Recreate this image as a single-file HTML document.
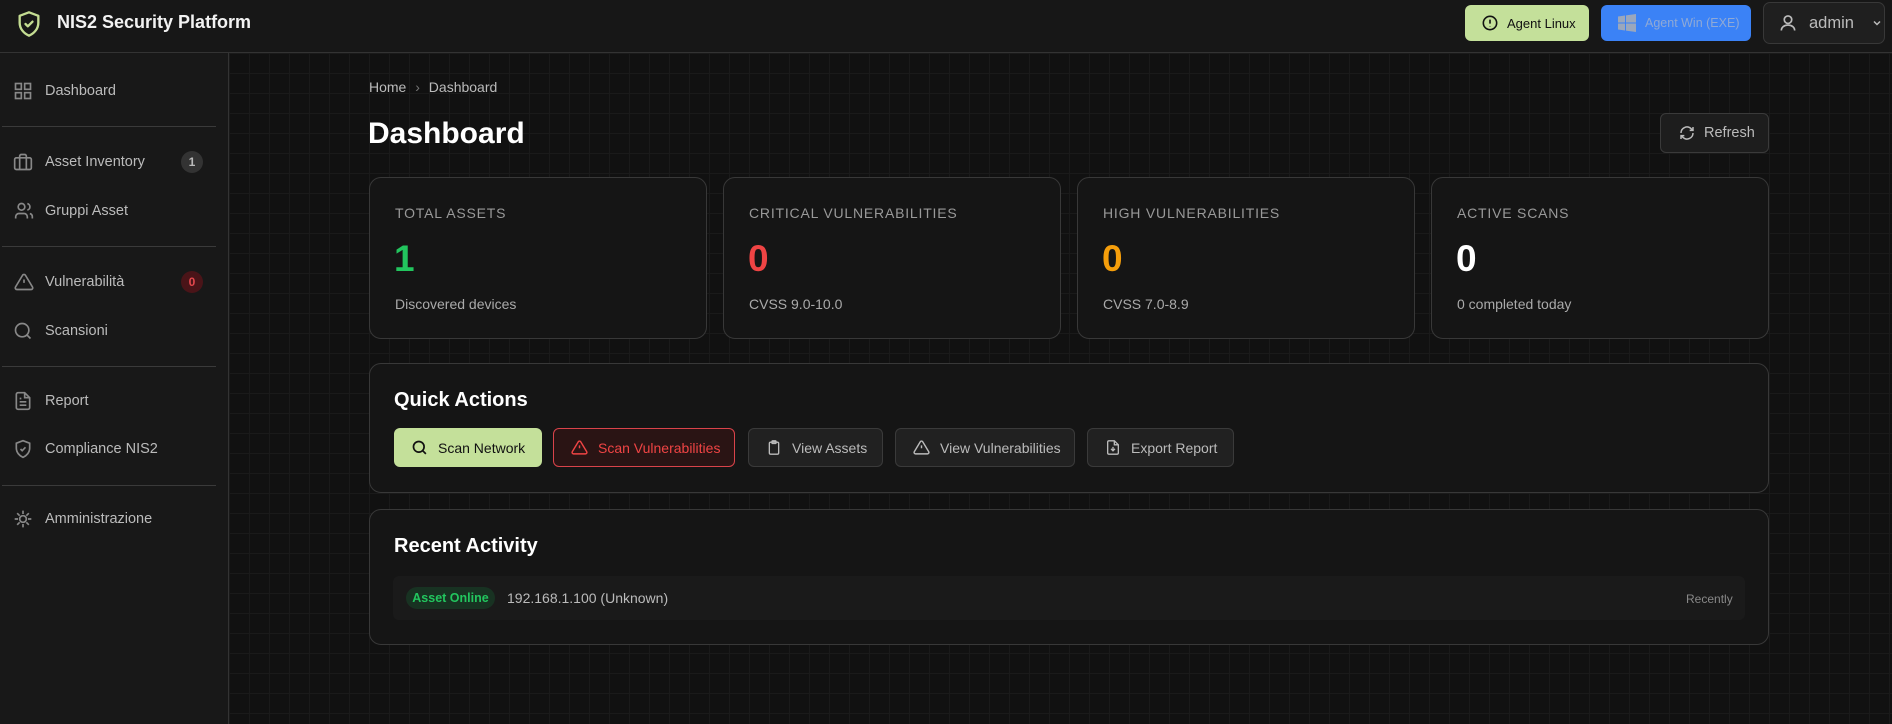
<!DOCTYPE html>
<html><head><meta charset="utf-8"><style>
*{box-sizing:border-box;margin:0;padding:0}
body{width:1892px;height:724px;overflow:hidden;background:#111;font-family:"Liberation Sans",sans-serif;color:#ddd;position:relative}
.main{position:absolute;left:229px;top:53px;right:0;bottom:0;background-color:#111;background-image:linear-gradient(#1a1a1a 1px,transparent 1px),linear-gradient(90deg,#1a1a1a 1px,transparent 1px);background-size:20px 20px}
.hdr{position:absolute;left:0;top:0;width:1892px;height:53px;background:#171717;border-bottom:1px solid #333}
.side{position:absolute;left:0;top:53px;width:229px;bottom:0;background:#181818;border-right:1px solid #333}
.ab{position:absolute}
svg{display:block}
.nav{position:absolute;left:0;width:229px;height:30px;display:flex;align-items:center;font-size:14.5px;color:#bbb}
.nav svg{position:absolute;left:13px}
.nav span{position:absolute;left:45px}
.badge{position:absolute;left:181px;width:22px;height:22px;border-radius:11px;font-size:12px;font-weight:bold;display:flex;align-items:center;justify-content:center}
.div{position:absolute;left:2px;width:214px;height:1px;background:#3a3a3a}
.card{position:absolute;background:#151515;border:1px solid #383838;border-radius:12px}
.lbl{position:absolute;left:25px;top:27px;font-size:14px;letter-spacing:0.8px;color:#999}
.num{position:absolute;left:24px;top:60px;font-size:37px;font-weight:bold}
.sub{position:absolute;left:25px;top:118px;font-size:14px;color:#aaa}
.btn{position:absolute;top:428px;height:39px;border-radius:6px;display:flex;align-items:center;font-size:14px;padding-left:17px;gap:10px}
.gb{background:#212121;border:1px solid #3a3a3a;color:#bbb}
</style></head><body>
<div class="main"></div>
<div class="hdr">
 <svg class="ab" style="left:15px;top:8px" width="28" height="32" viewBox="0 0 24 24" fill="none" stroke="#c4dd92" stroke-width="2" stroke-linejoin="round"><path d="M12 2 4 5v6c0 5 3.5 9 8 11 4.5-2 8-6 8-11V5z"/><path d="m9 12 2 2 4-4" stroke-linecap="round"/></svg>
 <div class="ab" style="left:57px;top:12px;font-size:18px;font-weight:bold;color:#f2f2f2">NIS2 Security Platform</div>
 <div class="ab" style="left:1465px;top:5px;width:124px;height:36px;background:#c4e09a;border-radius:6px;display:flex;align-items:center;gap:9px;padding-left:17px;font-size:13px;color:#111">
  <svg width="16" height="16" viewBox="0 0 24 24" fill="none" stroke="#111" stroke-width="2.4"><circle cx="12" cy="12" r="10"/><path d="M12 7v6M12 16.5v.5"/></svg>Agent Linux</div>
 <div class="ab" style="left:1601px;top:5px;width:150px;height:36px;background:#3b82f6;border-radius:6px;display:flex;align-items:center;gap:9px;padding-left:17px;font-size:12.5px;color:#8fa9d6">
  <svg width="18" height="18" viewBox="0 0 18 18" fill="#9aa7bd"><path d="M0 2.5 7 1.5v7H0zM8 1.4 18 0v8.5H8zM0 9.5h7v7L0 15.5zM8 9.5h10V18L8 16.6z"/></svg>Agent Win (EXE)</div>
 <div class="ab" style="left:1763px;top:2px;width:122px;height:42px;background:#1f1f1f;border:1px solid #383838;border-radius:7px;display:flex;align-items:center;gap:11px;padding-left:14px;font-size:16.5px;color:#bbb">
  <svg width="20" height="20" viewBox="0 0 24 24" fill="none" stroke="#bbb" stroke-width="2"><circle cx="12" cy="8" r="4.5"/><path d="M4 21c0-4 3.5-6.5 8-6.5s8 2.5 8 6.5"/></svg>admin
  <svg width="12" height="12" viewBox="0 0 24 24" fill="none" stroke="#bbb" stroke-width="3" style="margin-left:6px"><path d="m6 9 6 6 6-6"/></svg></div>
</div>
<div class="side">
 <div class="nav" style="top:23px"><svg width="20" height="20" viewBox="0 0 24 24" fill="none" stroke="#888" stroke-width="2"><rect x="3" y="3" width="7" height="7"/><rect x="14" y="3" width="7" height="7"/><rect x="3" y="14" width="7" height="7"/><rect x="14" y="14" width="7" height="7"/></svg><span>Dashboard</span></div>
 <div class="div" style="top:73px"></div>
 <div class="nav" style="top:94px"><svg width="20" height="20" viewBox="0 0 24 24" fill="none" stroke="#888" stroke-width="2"><rect x="2" y="7" width="20" height="14" rx="2"/><path d="M16 21V5a2 2 0 0 0-2-2h-4a2 2 0 0 0-2 2v16"/></svg><span>Asset Inventory</span><div class="badge" style="background:#333;color:#bbb">1</div></div>
 <div class="nav" style="top:143px"><svg width="22" height="20" viewBox="0 0 24 24" fill="none" stroke="#888" stroke-width="2"><circle cx="9" cy="7" r="4"/><path d="M2 21v-2a4 4 0 0 1 4-4h6a4 4 0 0 1 4 4v2M16 3.1a4 4 0 0 1 0 7.8M22 21v-2a4 4 0 0 0-3-3.9"/></svg><span>Gruppi Asset</span></div>
 <div class="div" style="top:193px"></div>
 <div class="nav" style="top:214px"><svg width="22" height="20" viewBox="0 0 24 24" fill="none" stroke="#888" stroke-width="2"><path d="M10.3 3.9 1.8 18a2 2 0 0 0 1.7 3h17a2 2 0 0 0 1.7-3L13.7 3.9a2 2 0 0 0-3.4 0zM12 9v4M12 17h.01"/></svg><span>Vulnerabilità</span><div class="badge" style="background:#4a1418;color:#e5484d">0</div></div>
 <div class="nav" style="top:263px"><svg width="20" height="20" viewBox="0 0 24 24" fill="none" stroke="#888" stroke-width="2"><circle cx="11" cy="11" r="8"/><path d="m21 21-4.3-4.3"/></svg><span>Scansioni</span></div>
 <div class="div" style="top:313px"></div>
 <div class="nav" style="top:333px"><svg width="20" height="20" viewBox="0 0 24 24" fill="none" stroke="#888" stroke-width="2"><path d="M14 2H6a2 2 0 0 0-2 2v16a2 2 0 0 0 2 2h12a2 2 0 0 0 2-2V8z"/><path d="M14 2v6h6M16 13H8M16 17H8M10 9H8"/></svg><span>Report</span></div>
 <div class="nav" style="top:381px"><svg width="20" height="20" viewBox="0 0 24 24" fill="none" stroke="#888" stroke-width="2"><path d="M12 2 4 5v6c0 5 3.5 9 8 11 4.5-2 8-6 8-11V5z"/><path d="m9 12 2 2 4-4"/></svg><span>Compliance NIS2</span></div>
 <div class="div" style="top:432px"></div>
 <div class="nav" style="top:451px"><svg width="20" height="20" viewBox="0 0 24 24" fill="none" stroke="#888" stroke-width="2"><circle cx="12" cy="12" r="4"/><path d="M12 2v4M12 18v4M2 12h4M18 12h4M5 5l3 3M16 16l3 3M5 19l3-3M16 8l3-3"/></svg><span>Amministrazione</span></div>
</div>

<div class="ab" style="left:369px;top:79px;font-size:14px;color:#bbb">Home <span style="color:#777;margin:0 5px">›</span> Dashboard</div>
<div class="ab" style="left:368px;top:117px;font-size:30px;font-weight:bold;color:#fff">Dashboard</div>
<div class="ab" style="left:1660px;top:113px;width:109px;height:40px;background:#1d1d1d;border:1px solid #3a3a3a;border-radius:6px;display:flex;align-items:center;gap:9px;padding-left:18px;font-size:14.5px;color:#bbb">
 <svg width="16" height="16" viewBox="0 0 24 24" fill="none" stroke="#bbb" stroke-width="2.2"><path d="M3 12a9 9 0 0 1 15-6.7L21 8M21 3v5h-5M21 12a9 9 0 0 1-15 6.7L3 16M3 21v-5h5"/></svg>Refresh</div>

<div class="card" style="left:369px;top:177px;width:338px;height:162px"><div class="lbl">TOTAL ASSETS</div><div class="num" style="color:#22c55e">1</div><div class="sub">Discovered devices</div></div>
<div class="card" style="left:723px;top:177px;width:338px;height:162px"><div class="lbl">CRITICAL VULNERABILITIES</div><div class="num" style="color:#ef4444">0</div><div class="sub">CVSS 9.0-10.0</div></div>
<div class="card" style="left:1077px;top:177px;width:338px;height:162px"><div class="lbl">HIGH VULNERABILITIES</div><div class="num" style="color:#f59e0b">0</div><div class="sub">CVSS 7.0-8.9</div></div>
<div class="card" style="left:1431px;top:177px;width:338px;height:162px"><div class="lbl">ACTIVE SCANS</div><div class="num" style="color:#fff">0</div><div class="sub">0 completed today</div></div>

<div class="card" style="left:369px;top:363px;width:1400px;height:130px"></div>
<div class="ab" style="left:394px;top:389px;font-size:20px;font-weight:bold;color:#fff">Quick Actions</div>
<div class="btn" style="left:394px;width:148px;background:#c4e09a;color:#111"><svg width="17" height="17" viewBox="0 0 24 24" fill="none" stroke="#111" stroke-width="2.4"><circle cx="11" cy="11" r="7.5"/><path d="m21 21-4.5-4.5"/></svg>Scan Network</div>
<div class="btn" style="left:553px;width:182px;background:#2a1414;border:1px solid #d9434a;color:#ef4444"><svg width="17" height="17" viewBox="0 0 24 24" fill="none" stroke="#ef4444" stroke-width="2"><path d="M10.3 3.9 1.8 18a2 2 0 0 0 1.7 3h17a2 2 0 0 0 1.7-3L13.7 3.9a2 2 0 0 0-3.4 0zM12 9v4M12 17h.01"/></svg>Scan Vulnerabilities</div>
<div class="btn gb" style="left:748px;width:135px"><svg width="16" height="17" viewBox="0 0 24 24" fill="none" stroke="#bbb" stroke-width="2"><rect x="5" y="4" width="14" height="18" rx="2"/><rect x="9" y="2" width="6" height="4" rx="1"/></svg>View Assets</div>
<div class="btn gb" style="left:895px;width:180px"><svg width="17" height="17" viewBox="0 0 24 24" fill="none" stroke="#bbb" stroke-width="2"><path d="M10.3 3.9 1.8 18a2 2 0 0 0 1.7 3h17a2 2 0 0 0 1.7-3L13.7 3.9a2 2 0 0 0-3.4 0zM12 9v4M12 17h.01"/></svg>View Vulnerabilities</div>
<div class="btn gb" style="left:1087px;width:147px"><svg width="16" height="17" viewBox="0 0 24 24" fill="none" stroke="#bbb" stroke-width="2"><path d="M14 2H6a2 2 0 0 0-2 2v16a2 2 0 0 0 2 2h12a2 2 0 0 0 2-2V8zM14 2v6h6M12 11v6M9 14l3 3 3-3"/></svg>Export Report</div>

<div class="card" style="left:369px;top:509px;width:1400px;height:136px"></div>
<div class="ab" style="left:394px;top:535px;font-size:20px;font-weight:bold;color:#fff">Recent Activity</div>
<div class="ab" style="left:393px;top:576px;width:1352px;height:44px;background:#1a1a1a;border-radius:6px"></div>
<div class="ab" style="left:406px;top:587px;width:89px;height:22px;border-radius:11px;background:#183222;color:#22c55e;font-size:12.5px;font-weight:bold;display:flex;align-items:center;justify-content:center">Asset Online</div>
<div class="ab" style="left:507px;top:590px;font-size:14px;color:#bbb">192.168.1.100 (Unknown)</div>
<div class="ab" style="left:1686px;top:592px;font-size:12px;color:#888">Recently</div>
</body></html>
